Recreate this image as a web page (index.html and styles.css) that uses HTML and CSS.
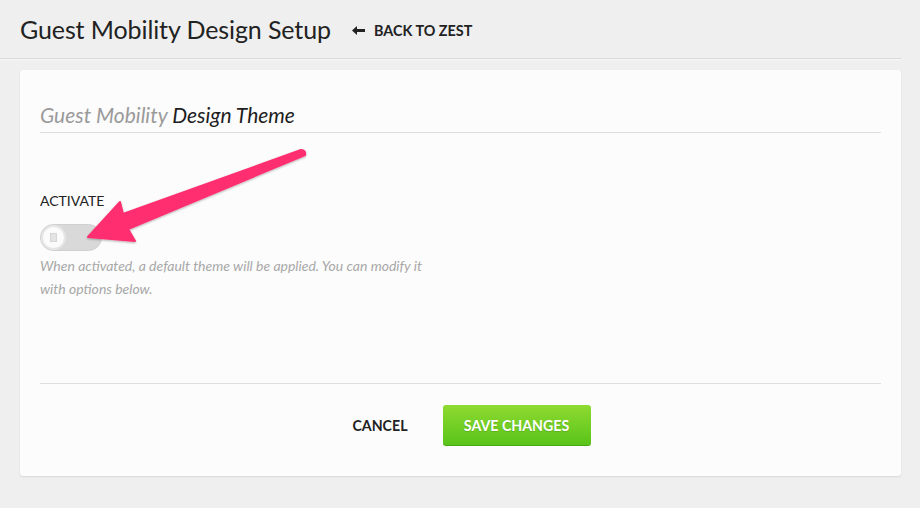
FILE: index.html
```html
<!DOCTYPE html>
<html>
<head>
<meta charset="utf-8">
<link rel="stylesheet" href="styles.css">
</head>
<body>
<div class="page">
  <header class="header">
    <h1 class="title">Guest Mobility Design Setup</h1>
    <a class="back" href="#"><svg class="back-arrow" width="13" height="9" viewBox="0 0 13 9"><path d="M0 4.5 L5 0 L5 3 L13 3 L13 6 L5 6 L5 9 Z" fill="#222"/></svg>BACK TO ZEST</a>
  </header>
  <main class="card">
    <h2 class="theme-heading"><span class="muted">Guest Mobility</span> Design Theme</h2>
    <div class="field-label">ACTIVATE</div>
    <div class="toggle"><span class="knob"><span class="grip"></span></span></div>
    <p class="help">When activated, a default theme will be applied. You can modify it with options below.</p>
    <div class="actions">
      <button class="btn-cancel">CANCEL</button>
      <button class="btn-save">SAVE CHANGES</button>
    </div>
  </main>
  <svg class="callout" width="920" height="508" viewBox="0 0 920 508">
    <defs>
      <filter id="sh" x="-10%" y="-10%" width="130%" height="130%">
        <feDropShadow dx="0" dy="1" stdDeviation="1" flood-color="#000" flood-opacity="0.3"/>
      </filter>
    </defs>
    <path d="M88 237 L120 202 L123 214 L301 150 Q306 150 305 155 L128 229 L135 241 Z" fill="#ff2e6f" stroke="#ff2e6f" stroke-width="2" stroke-linejoin="round" filter="url(#sh)"/>
  </svg>
</div>
</body>
</html>
```
FILE: styles.css
```css
html, body {
  margin: 0;
  padding: 0;
}
body {
  background: #efefef;
  font-family: "Lato", "Open Sans", sans-serif;
  color: #222;
  width: 920px;
  height: 508px;
  overflow: hidden;
}
.page {
  position: relative;
  width: 901px;
}
.header {
  height: 58px;
  border-bottom: 1px solid #d9d9d9;
  display: flex;
  align-items: center;
  padding-left: 20px;
  box-shadow: 0 1px 0 #f7f7f7;
}
.title {
  margin: 0;
  font-size: 25px;
  font-weight: 400;
  color: #222;
  letter-spacing: -0.1px;
}
.back {
  margin-left: 21px;
  font-size: 14.4px;
  font-weight: 700;
  color: #222;
  text-decoration: none;
  display: flex;
  align-items: center;
  margin-top: 2px;
}
.back-arrow {
  margin-right: 9px;
}
.card {
  margin: 11px 0 0 20px;
  width: 841px;
  height: 375px;
  padding: 31px 20px 0 20px;
  background: #fcfcfc;
  border-radius: 3px;
  box-shadow: 0 1px 2px rgba(0,0,0,0.1);
  display: flex;
  flex-direction: column;
}
.theme-heading {
  margin: 0;
  font-size: 21px;
  line-height: 28px;
  font-weight: 400;
  font-style: italic;
  color: #1e1e1e;
  padding-bottom: 3px;
  border-bottom: 1px solid #dedede;
}
.muted {
  color: #9a9a9a;
}
.field-label {
  margin-top: 58px;
  font-size: 14px;
  line-height: 20px;
  color: #222;
}
.toggle {
  margin-top: 13px;
  width: 60px;
  height: 25px;
  border-radius: 14px;
  background: #d9d9d9;
  border: 1px solid #d0d0d0;
  position: relative;
  box-sizing: content-box;
}
.knob {
  position: absolute;
  left: 0;
  top: 0;
  width: 21px;
  height: 21px;
  border-radius: 50%;
  background: #fbfbfb;
  border: 2px solid #e6e6e6;
  display: flex;
  align-items: center;
  justify-content: center;
}
.grip {
  width: 5px;
  height: 7px;
  background: #e4e4e4;
  border: 1px solid #d6d6d6;
}
.help {
  margin: 3px 0 0 0;
  width: 395px;
  font-size: 14px;
  line-height: 23px;
  font-style: italic;
  color: #a8a8a8;
}
.actions {
  margin-top: 83px;
  border-top: 1px solid #dedede;
  padding-top: 21px;
  display: flex;
  justify-content: center;
  gap: 13px;
}
.btn-cancel {
  background: none;
  border: none;
  padding: 0 22px;
  font-family: inherit;
  font-size: 14.2px;
  font-weight: 700;
  color: #222;
  height: 41px;
}
.btn-save {
  width: 148px;
  height: 41px;
  border: none;
  border-bottom: 1px solid #4aa812;
  border-radius: 3px;
  background: linear-gradient(#8fda30, #59c41a);
  color: #fff;
  font-family: inherit;
  font-size: 14.2px;
  font-weight: 700;
  text-shadow: 0 1px 1px rgba(0,0,0,0.15);
}
.callout {
  position: absolute;
  left: 0;
  top: 0;
  pointer-events: none;
}
```
